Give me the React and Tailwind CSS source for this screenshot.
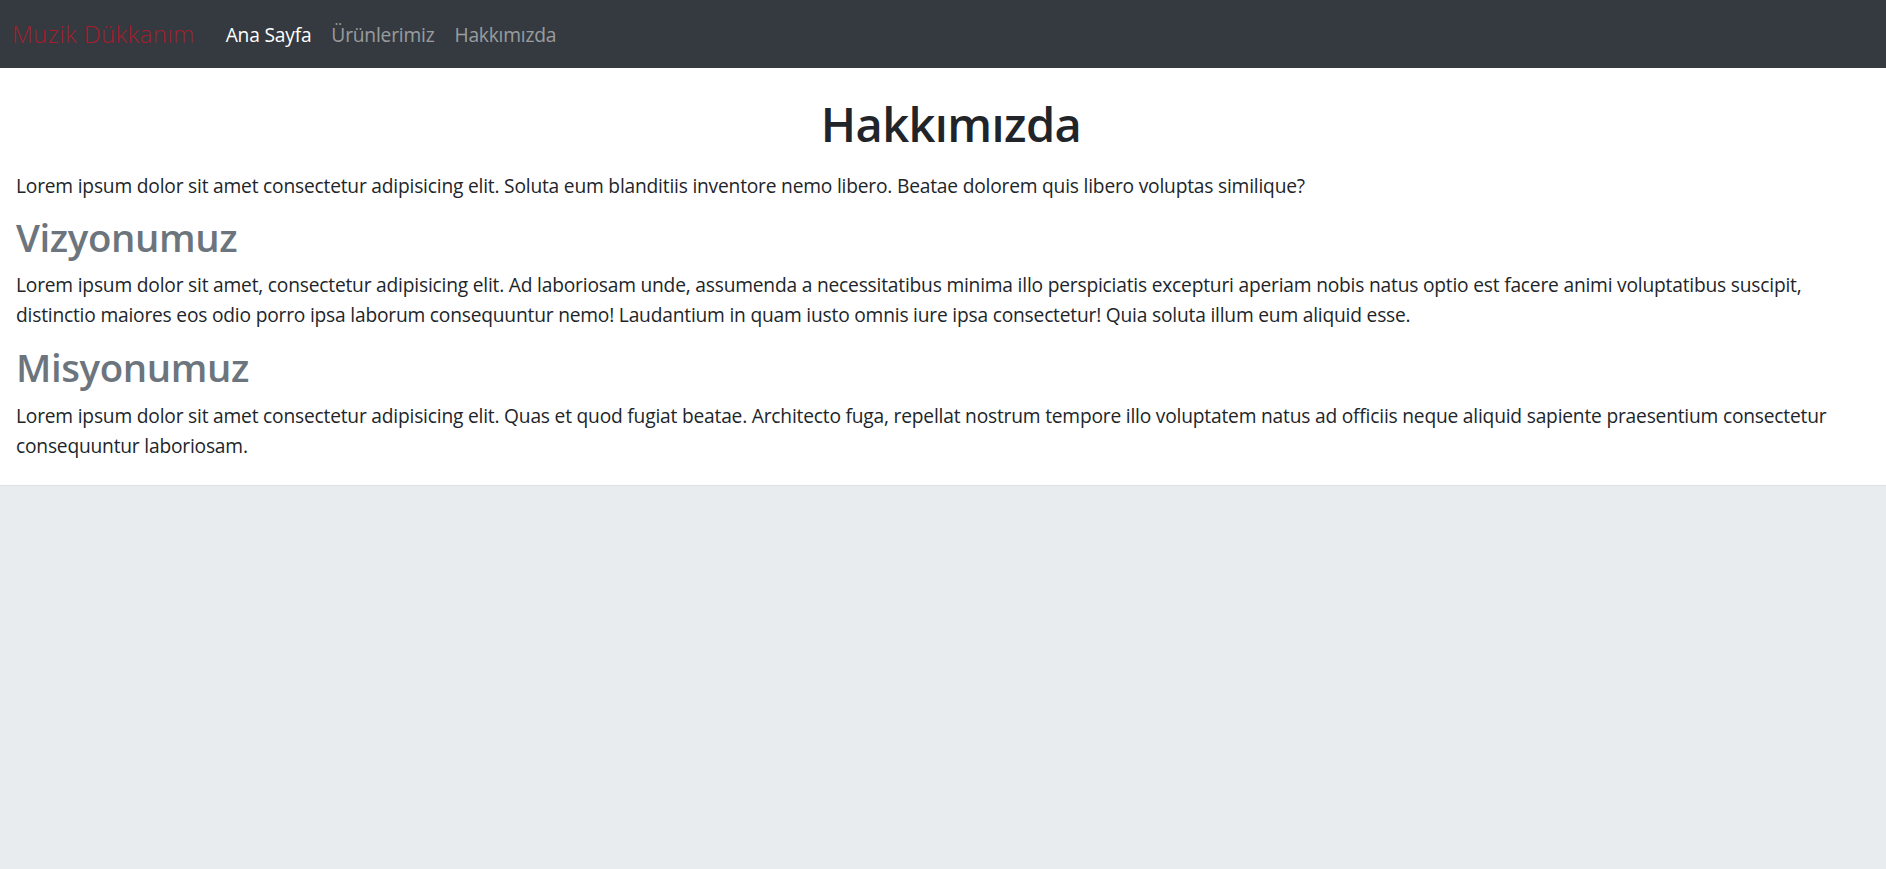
export default function App() {
  return (
    <div className="min-h-screen bg-[#e9ecef] font-['Open_Sans',sans-serif]">
      <nav className="h-[68px] bg-[#343a40] flex items-center pl-[12px]">
        <a href="#" className="text-[24px] leading-[36px] font-light tracking-[0.4px] text-[#a51e2c] mr-[21px]">
          Muzik Dükkanım
        </a>
        <ul className="flex items-center tracking-[-0.2px]">
          <li>
            <a href="#" className="block px-[10px] text-[19.2px] leading-[29px] text-white">
              Ana Sayfa
            </a>
          </li>
          <li>
            <a href="#" className="block px-[10px] text-[19.2px] leading-[29px] text-white/50">
              Ürünlerimiz
            </a>
          </li>
          <li>
            <a href="#" className="block px-[10px] text-[19.2px] leading-[29px] text-white/50">
              Hakkımızda
            </a>
          </li>
        </ul>
      </nav>
      <div className="bg-white border-b border-[#dee2e6] pl-[16px] pt-[27px] pb-[24px] text-[#212529]">
        <h1 className="text-center text-[47px] leading-[58px] font-semibold tracking-[-0.6px] mb-[18px]">
          Hakkımızda
        </h1>
        <div className="pr-[18px] tracking-[-0.2px]">
          <p className="text-[19.2px] leading-[30px] mb-[13px]">
            Lorem ipsum dolor sit amet consectetur adipisicing elit. Soluta eum blanditiis inventore nemo libero. Beatae dolorem quis libero voluptas similique?
          </p>
          <h2 className="text-[38.4px] leading-[46px] font-semibold tracking-[-0.4px] text-[#6c757d] mb-[10px]">
            Vizyonumuz
          </h2>
          <p className="text-[19.2px] leading-[30px] mb-[14px]">
            Lorem ipsum dolor sit amet, consectetur adipisicing elit. Ad laboriosam unde, assumenda a necessitatibus minima illo perspiciatis excepturi aperiam nobis natus optio est facere animi voluptatibus suscipit, distinctio maiores eos odio porro ipsa laborum consequuntur nemo! Laudantium in quam iusto omnis iure ipsa consectetur! Quia soluta illum eum aliquid esse.
          </p>
          <h2 className="text-[38.4px] leading-[46px] font-semibold tracking-[-0.4px] text-[#6c757d] mb-[11px]">
            Misyonumuz
          </h2>
          <p className="text-[19.2px] leading-[30px]">
            Lorem ipsum dolor sit amet consectetur adipisicing elit. Quas et quod fugiat beatae. Architecto fuga, repellat nostrum tempore illo voluptatem natus ad officiis neque aliquid sapiente praesentium consectetur consequuntur laboriosam.
          </p>
        </div>
      </div>
    </div>
  );
}
